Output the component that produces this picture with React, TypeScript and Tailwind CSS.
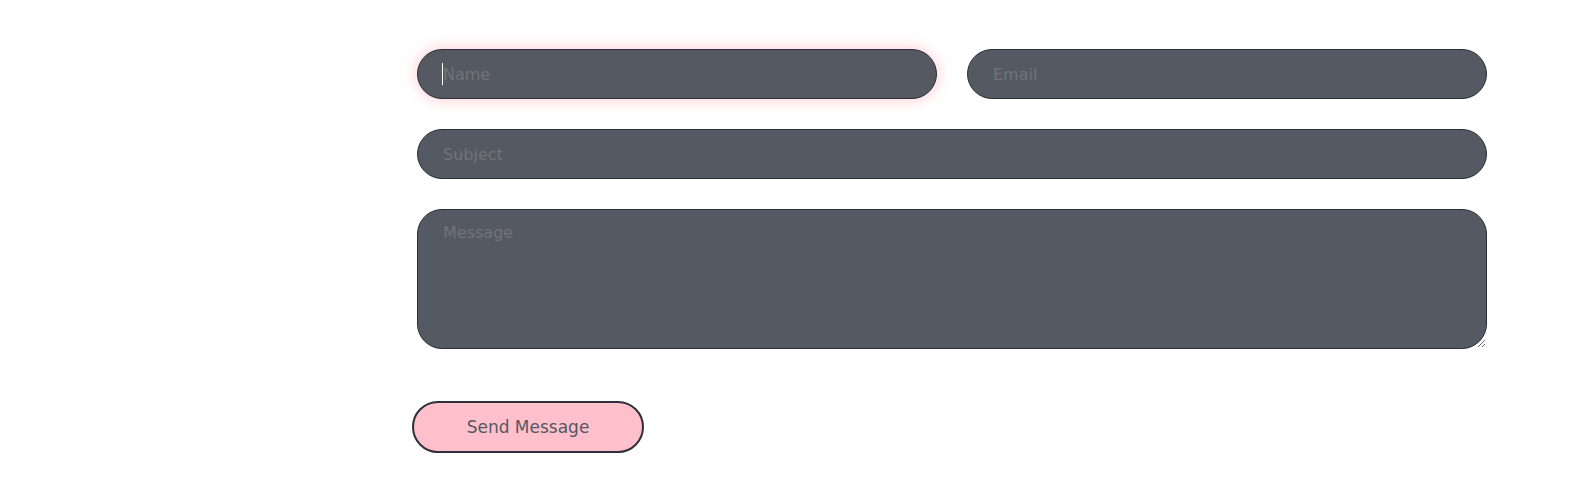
import { useState } from "react";

type FormState = {
  name: string;
  email: string;
  subject: string;
  message: string;
};

// shared field look
const fieldClass =
  "w-full bg-[#555a62] border border-[#2b303a] text-[16px] text-[#e5e7eb] placeholder:text-[#727378] px-[25px] outline-none focus:shadow-[0_0_15px_rgba(255,160,178,0.6)]";

export default function App() {
  const [form, setForm] = useState<FormState>({ name: "", email: "", subject: "", message: "" });
  const [nameFocused, setNameFocused] = useState(true);

  const update = (key: keyof FormState) => (e: React.ChangeEvent<HTMLInputElement | HTMLTextAreaElement>) =>
    setForm({ ...form, [key]: e.target.value });

  return (
    <div className="min-h-[484px] bg-white font-['DejaVu_Sans',sans-serif]">
      <div className="pl-[417px] pt-[49px] w-[1487px]">
        <form className="flex flex-col gap-[30px]" onSubmit={(e) => e.preventDefault()}>
          <div className="grid grid-cols-2 gap-[30px]">
            <div className="relative min-w-0">
              <input
                autoFocus
                className={`${fieldClass} h-[50px] rounded-full`}
                placeholder="Name"
                value={form.name}
                onFocus={() => setNameFocused(true)}
                onBlur={() => setNameFocused(false)}
                onChange={update("name")}
              />
              {nameFocused && form.name === "" && (
                <span className="pointer-events-none absolute left-[25px] top-[14px] h-[22px] w-px bg-white" />
              )}
            </div>
            <input
              className={`${fieldClass} h-[50px] rounded-full min-w-0`}
              placeholder="Email"
              type="email"
              value={form.email}
              onChange={update("email")}
            />
          </div>

          <input
            className={`${fieldClass} h-[50px] rounded-full`}
            placeholder="Subject"
            value={form.subject}
            onChange={update("subject")}
          />

          <textarea
            className={`${fieldClass} h-[140px] rounded-[25px] py-[11px] block`}
            placeholder="Message"
            value={form.message}
            onChange={update("message")}
          />

          <div className="pt-[22px]">
            <button
              type="submit"
              className="-ml-[5px] w-[232px] h-[52px] pt-[2px] rounded-full bg-[#ffc0cb] border-2 border-[#2e2f3d] text-[#535862] text-[17px]"
            >
              Send Message
            </button>
          </div>
        </form>
      </div>
    </div>
  );
}
